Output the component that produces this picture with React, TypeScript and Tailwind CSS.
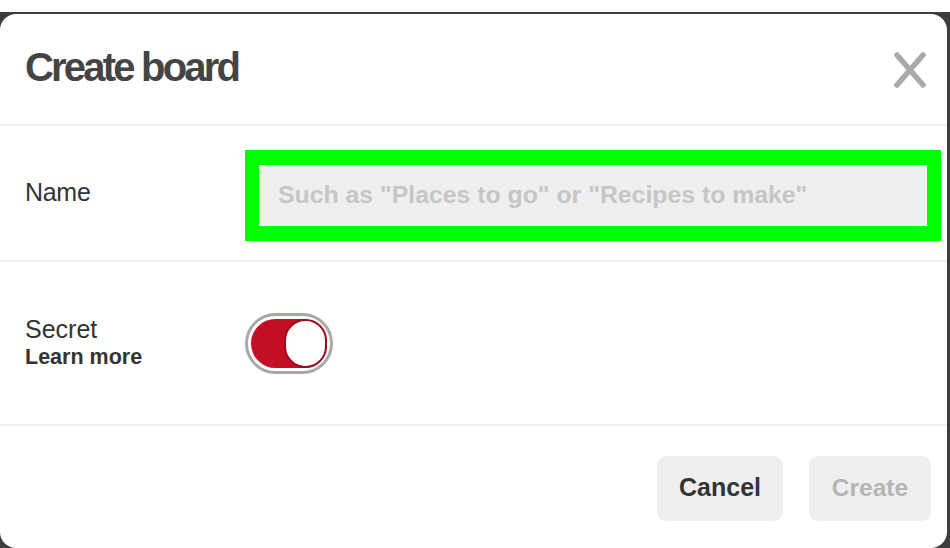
import { useState } from 'react';

function CloseIcon() {
  return (
    <svg width="34" height="38" viewBox="0 0 34 38" fill="none">
      <path
        d="M4 4l26 30M30 4L4 34"
        stroke="#a9a9a9"
        strokeWidth={5.5}
        strokeLinecap="round"
      />
    </svg>
  );
}

function Toggle({ on, onChange }: { on: boolean; onChange: () => void }) {
  return (
    <button
      type="button"
      onClick={onChange}
      aria-pressed={on}
      className="w-[88px] h-[61px] rounded-full border-[3px] border-[#a8a8a8] bg-white p-[3px] flex"
    >
      <span
        className={`flex-1 rounded-full flex items-center ${on ? 'bg-[#c20f24] justify-end' : 'bg-[#d9d9d9] justify-start'}`}
      >
        <span className="w-[43px] h-full rounded-full bg-white border-2 border-[#9c0c1c]" />
      </span>
    </button>
  );
}

export default function App() {
  const [name, setName] = useState('');
  const [secret, setSecret] = useState(true);

  return (
    <div
      className="w-[950px] h-[548px] overflow-hidden bg-white flex flex-col"
      style={{ fontFamily: '"Liberation Sans", Arial, sans-serif' }}
    >
      <div className="h-[12px] shrink-0 bg-white" />
      <div className="flex-1 bg-[#3d3d3d] pt-[2px] flex">
        <div className="flex-1 bg-white rounded-[16px] mr-[3px] flex flex-col">
          {/* Header */}
          <div className="h-[112px] shrink-0 flex items-center justify-between pl-[25px] pr-[20px] border-b-2 border-[#f2f2f2]">
            <h1 className="text-[40px] font-bold text-[#444] tracking-[-2.8px] -mt-[4px]">
              Create board
            </h1>
            <button type="button" aria-label="Close" className="mt-[1px]">
              <CloseIcon />
            </button>
          </div>

          {/* Name row */}
          <div className="h-[136px] shrink-0 flex items-center pl-[25px] pr-[6px] border-b-2 border-[#f2f2f2]">
            <label className="w-[220px] shrink-0 text-[25px] text-[#333] tracking-[-0.3px]">
              Name
            </label>
            <div className="flex-1 h-[91px] bg-[#00ff00] px-[14px] py-[15px] mt-[4px]">
              <input
                value={name}
                onChange={(e) => setName(e.target.value)}
                placeholder={'Such as "Places to go" or "Recipes to make"'}
                className="w-full h-full bg-[#efefef] px-[19px] text-[24.8px] font-bold text-[#333] placeholder:text-[#c6c6c6] outline-none"
              />
            </div>
          </div>

          {/* Secret row */}
          <div className="h-[164px] shrink-0 flex items-center pl-[25px] border-b-2 border-[#f2f2f2]">
            <div className="w-[220px] shrink-0 flex flex-col text-[#333]">
              <span className="text-[25px] leading-[28px]">Secret</span>
              <span className="text-[21.5px] font-bold leading-[28px]">
                Learn more
              </span>
            </div>
            <Toggle on={secret} onChange={() => setSecret((v) => !v)} />
          </div>

          {/* Footer */}
          <div className="flex-1 flex items-center justify-end gap-[26px] pr-[16px] pt-[2px]">
            <button
              type="button"
              className="w-[126px] h-[65px] rounded-[9px] bg-[#efefef] text-[25px] font-bold text-[#333]"
            >
              Cancel
            </button>
            <button
              type="button"
              disabled={!name}
              className="w-[122px] h-[65px] rounded-[9px] bg-[#efefef] text-[24.5px] font-bold text-[#b5b5b5] disabled:cursor-default"
            >
              Create
            </button>
          </div>
        </div>
      </div>
    </div>
  );
}
